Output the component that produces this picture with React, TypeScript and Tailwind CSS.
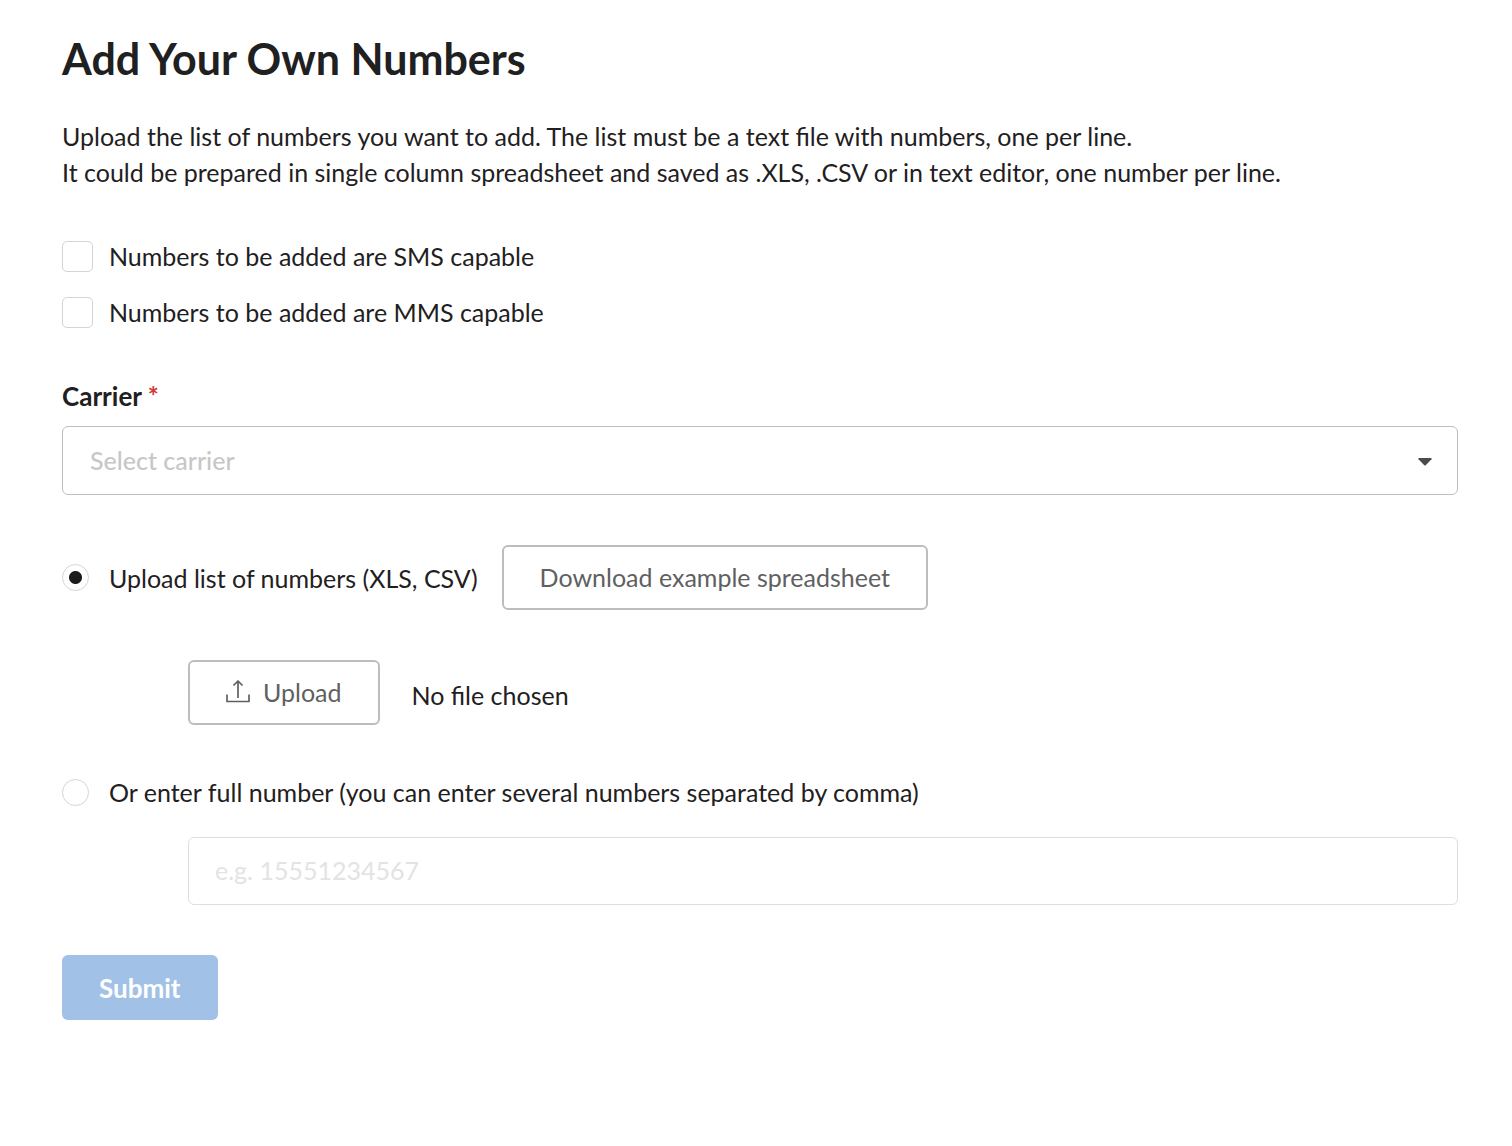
import { useState } from "react";

const radioClass =
  "size-[27px] shrink-0 appearance-none rounded-full border border-[#d4d4d5] bg-white bg-[radial-gradient(circle,#1b1c1d_0_6px,transparent_7px)] bg-no-repeat not-checked:bg-none";
const checkboxClass =
  "size-[31px] shrink-0 appearance-none rounded-[5px] border border-[#d4d4d5] bg-white checked:bg-[#1b1c1d]";
const outlineButton =
  "flex h-[65px] items-center justify-center rounded-md border-2 border-[#bcbdbd] bg-white pb-0.5 text-[#5f6061]";

export default function App() {
  const [mode, setMode] = useState("upload");

  return (
    <main className="min-h-screen bg-white pt-8 pr-[54px] pb-16 pl-[62px] font-['Lato',sans-serif] text-[25px] leading-9 text-[#1f2021]">
      <h1 className="text-[43px] leading-[54px] font-bold">Add Your Own Numbers</h1>
      <p className="mt-8">
        Upload the list of numbers you want to add. The list must be a text file with numbers, one per line.
        <br />
        It could be prepared in single column spreadsheet and saved as .XLS, .CSV or in text editor, one number per line.
      </p>

      <form onSubmit={(e) => e.preventDefault()}>
        <div className="mt-12 flex flex-col items-start gap-5">
          <label className="flex items-center gap-4">
            <input type="checkbox" className={checkboxClass} />
            Numbers to be added are SMS capable
          </label>
          <label className="flex items-center gap-4">
            <input type="checkbox" className={checkboxClass} />
            Numbers to be added are MMS capable
          </label>
        </div>

        <label htmlFor="carrier" className="mt-12 block text-[26px] font-bold">
          Carrier <span className="text-[#cf3a33]">*</span>
        </label>
        <div className="relative mt-3">
          <select
            id="carrier"
            defaultValue=""
            className="block h-[69px] w-full appearance-none rounded-md border border-[#bcbdbd] bg-white px-[27px] pb-0.5 font-medium text-[#c7c7c7]"
          >
            <option value="">Select carrier</option>
          </select>
          <svg
            viewBox="0 0 14 8"
            className="pointer-events-none absolute top-8 right-[26px] h-2 w-3.5 fill-[#4a4b4c]"
            aria-hidden="true"
          >
            <path d="M1 0h12q1 .2.5 1.200L7.700 7.200q-.7.700-1.400 0L.5 1.200Q0 .2 1 0Z" />
          </svg>
        </div>

        <div className="mt-[50px] flex items-center gap-6">
          <label className="flex items-center gap-5">
            <input
              type="radio"
              name="mode"
              checked={mode === "upload"}
              onChange={() => setMode("upload")}
              className={radioClass}
            />
            Upload list of numbers (XLS, CSV)
          </label>
          <button type="button" className={`${outlineButton} px-9`}>
            Download example spreadsheet
          </button>
        </div>

        <div className="mt-[50px] ml-[126px] flex items-center gap-8">
          <button type="button" className={`${outlineButton} gap-[13px] px-9`}>
            <svg viewBox="0 0 24 24" className="size-6" fill="none" stroke="currentColor" strokeWidth="1.700" strokeLinejoin="round" aria-hidden="true">
              <path d="M12 18V1M7.500 5.500 12 1 16.500 5.500M1 14.500v7h22v-7" />
            </svg>
            Upload
          </button>
          <span className="pt-1">No file chosen</span>
        </div>

        <label className="mt-[49px] flex w-fit items-center gap-5">
          <input
            type="radio"
            name="mode"
            checked={mode === "manual"}
            onChange={() => setMode("manual")}
            className={radioClass}
          />
          Or enter full number (you can enter several numbers separated by comma)
        </label>
        <div className="mt-[27px] ml-[126px]">
          <input
            type="text"
            aria-label="Full number"
            placeholder="e.g. 15551234567"
            className="block h-[68px] w-full rounded-md border border-[#dededf] px-[26px] pb-0.5 placeholder:text-[#e3e3e3]"
          />
        </div>

        <button type="submit" className="mt-[50px] h-[65px] rounded-md bg-[#a2c1e6] px-[37px] text-[26px] font-bold text-white">
          Submit
        </button>
      </form>
    </main>
  );
}
